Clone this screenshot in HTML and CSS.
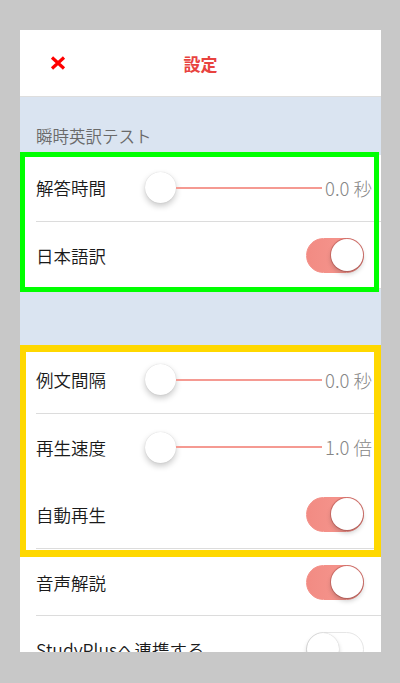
FILE: index.html
```html
<!DOCTYPE html>
<html lang="ja">
 <head>
  <meta charset="utf-8">
  <title>設定</title>
  <link rel="stylesheet" href="styles.css">
 </head>
 <body>
  <div class="screen">
   <div class="navbar">
    <span class="close">
     <svg width="16" height="14" viewBox="0 0 16 14">
      <path d="M2 1.5 L14 12.5 M14 1.5 L2 12.5" stroke="#ff0000" stroke-width="3.2" stroke-linecap="butt"/>
     </svg>
    </span>
    <span class="title">設定</span>
   </div>

   <div class="sectionHead">瞬時英訳テスト</div>
   <div class="row">
    <span class="label">解答時間</span>
    <div class="slider"><span class="thumb"></span><span class="track"></span></div>
    <span class="value">0.0 秒</span>
   </div>
   <div class="row">
    <span class="label">日本語訳</span>
    <span class="switch on"><span class="knob"></span></span>
   </div>

   <div class="sectionHead"></div>
   <div class="row">
    <span class="label">例文間隔</span>
    <div class="slider"><span class="thumb"></span><span class="track"></span></div>
    <span class="value">0.0 秒</span>
   </div>
   <div class="row plain">
    <span class="label">再生速度</span>
    <div class="slider"><span class="thumb"></span><span class="track"></span></div>
    <span class="value">1.0 倍</span>
   </div>
   <div class="row">
    <span class="label">自動再生</span>
    <span class="switch on"><span class="knob"></span></span>
   </div>
   <div class="row">
    <span class="label">音声解説</span>
    <span class="switch on"><span class="knob"></span></span>
   </div>
   <div class="row">
    <span class="label">StudyPlusへ連携する</span>
    <span class="switch"><span class="knob"></span></span>
   </div>

   <div class="mark green"></div>
   <div class="mark yellow"></div>
  </div>
 </body>
</html>
```

FILE: styles.css
```css
html, body {
	margin: 0;
	padding: 0;
	background-color: #c8c8c8;
	font-family: "Noto Sans CJK JP", "Noto Sans", sans-serif;
}

div.screen {
	position: relative;
	margin-top: 30px;
	margin-left: 20px;
	width: 361px;
	height: 622px;
	overflow: hidden;
	background-color: #ffffff;
}

div.navbar {
	height: 66px;
	border-bottom: 1px solid #dedede;
	display: flex;
	align-items: center;
	justify-content: center;
	position: relative;
}

span.close {
	position: absolute;
	left: 30px;
	top: 26px;
	line-height: 0;
}

span.title {
	color: #e8433f;
	font-size: 17px;
	font-weight: 700;
}

div.sectionHead {
	height: 57.5px;
	box-sizing: border-box;
	background-color: #dae4f1;
	color: #6a6a6a;
	font-size: 16.5px;
	font-weight: 350;
	padding-left: 16px;
	padding-top: 26px;
	line-height: 26px;
}

div.row {
	height: 67.4px;
	box-sizing: border-box;
	margin-left: 16px;
	padding-right: 17px;
	display: flex;
	align-items: center;
	border-bottom: 1px solid #dcdcdc;
}

div.row.plain {
	border-bottom-color: transparent;
}

span.label {
	flex: 1;
	color: #1a1a1a;
	font-size: 17.5px;
	font-weight: 350;
	white-space: nowrap;
}

div.row:has(div.slider) {
	padding-right: 0;
}

div.row:has(div.slider) span.label {
	flex: none;
	width: 109px;
}

div.slider {
	flex: none;
	display: flex;
	align-items: center;
	width: 177px;
	margin-right: 3px;
}

span.thumb {
	flex: none;
	width: 31px;
	height: 31px;
	border-radius: 50%;
	background-color: #ffffff;
	box-shadow: 0 3px 6px rgba(0, 0, 0, 0.22), 0 0 1px rgba(0, 0, 0, 0.18);
}

span.track {
	flex: 1;
	height: 2px;
	background-color: #f59a92;
}

span.value {
	color: #868686;
	font-size: 18.5px;
	font-weight: 300;
	white-space: nowrap;
}

span.switch {
	flex: none;
	position: relative;
	width: 58px;
	height: 35px;
	box-sizing: border-box;
	border-radius: 18px;
	background-color: #ffffff;
	border: 1.5px solid #e6e6e6;
}

span.switch.on {
	background: linear-gradient(90deg, #f28b83, #f69a92);
	border-color: #f49189;
}

span.knob {
	position: absolute;
	top: 0;
	left: 0;
	width: 32px;
	height: 32px;
	border-radius: 50%;
	background-color: #ffffff;
	box-shadow: 0 3px 5px rgba(0, 0, 0, 0.2), 0 0 1px rgba(0, 0, 0, 0.25);
}

span.switch.on span.knob {
	left: auto;
	right: 0;
	box-shadow: 0 3px 5px rgba(0, 0, 0, 0.2), 0 0 0 1px rgba(190, 90, 85, 0.6);
}

div.mark {
	position: absolute;
	box-sizing: border-box;
	left: 0;
}

div.mark.green {
	top: 122px;
	width: 359px;
	height: 140px;
	border: 5px solid #00ff00;
}

div.mark.yellow {
	top: 315px;
	width: 361px;
	height: 212px;
	border: 7px solid #ffd800;
	border-left-width: 6px;
}
```
